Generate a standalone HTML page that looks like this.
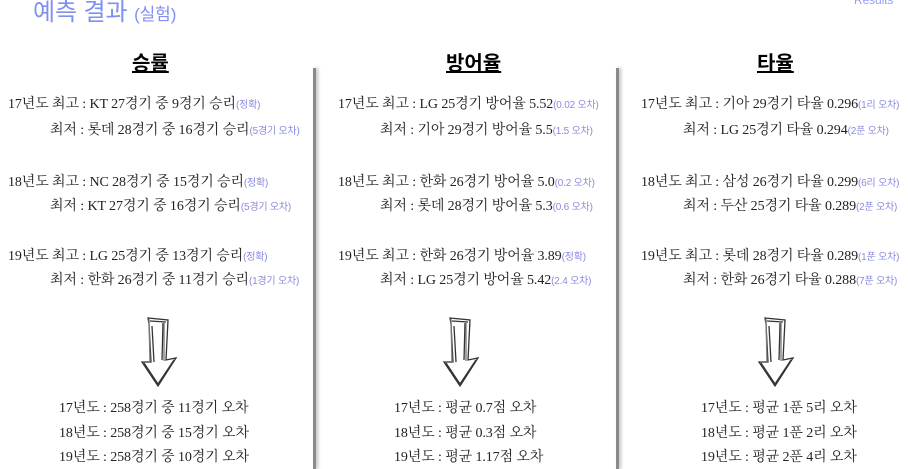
<!DOCTYPE html>
<html><head><meta charset="utf-8"><style>
body{margin:0;width:908px;height:469px;overflow:hidden;background:#fff;position:relative;font-family:"Liberation Serif","Noto Serif CJK KR","Noto Serif CJK SC",serif;font-size:14px;color:#222}
.a{position:absolute;white-space:nowrap;line-height:16px;letter-spacing:-0.1px}
.s{font-size:10px;color:#8a8ae0;font-family:"Liberation Sans","Noto Sans CJK KR",sans-serif;letter-spacing:-0.2px}
.h{position:absolute;font-family:"Liberation Sans","Noto Sans CJK KR",sans-serif;font-weight:bold;font-size:20px;text-decoration:underline;color:#000;line-height:24px}
.d{position:absolute;top:68px;width:3px;height:401px;background:#8a8a8a;box-shadow:2px 0 3px #bbb}
</style></head><body>
<div class="a" style="left:33px;top:0;font-family:'Liberation Sans','Noto Sans CJK KR',sans-serif;font-size:24px;line-height:26px;color:#7f8ff2">예측 결과 <span style="font-size:17px">(실험)</span></div>
<div class="a" style="left:854px;top:-8px;font-family:'Liberation Sans',sans-serif;font-size:12px;color:#8f9ff2">Results</div>
<div class="d" style="left:313px"></div><div class="d" style="left:616px"></div>
<div class="h" style="left:132px;top:52px">승률</div>
<div class="h" style="left:446px;top:52px">방어율</div>
<div class="h" style="left:757px;top:52px">타율</div>

<div class="a" style="left:8px;top:97px">17년도 최고 : KT 27경기 중 9경기 승리<span class="s">(정확)</span></div>
<div class="a" style="left:50px;top:123px">최저 : 롯데 28경기 중 16경기 승리<span class="s">(5경기 오차)</span></div>
<div class="a" style="left:8px;top:175px">18년도 최고 : NC 28경기 중 15경기 승리<span class="s">(정확)</span></div>
<div class="a" style="left:50px;top:199px">최저 : KT 27경기 중 16경기 승리<span class="s">(5경기 오차)</span></div>
<div class="a" style="left:8px;top:249px">19년도 최고 : LG 25경기 중 13경기 승리<span class="s">(정확)</span></div>
<div class="a" style="left:50px;top:273px">최저 : 한화 26경기 중 11경기 승리<span class="s">(1경기 오차)</span></div>

<div class="a" style="left:338px;top:97px">17년도 최고 : LG 25경기 방어율 5.52<span class="s">(0.02 오차)</span></div>
<div class="a" style="left:380px;top:123px">최저 : 기아 29경기 방어율 5.5<span class="s">(1.5 오차)</span></div>
<div class="a" style="left:338px;top:175px">18년도 최고 : 한화 26경기 방어율 5.0<span class="s">(0.2 오차)</span></div>
<div class="a" style="left:380px;top:199px">최저 : 롯데 28경기 방어율 5.3<span class="s">(0.6 오차)</span></div>
<div class="a" style="left:338px;top:249px">19년도 최고 : 한화 26경기 방어율 3.89<span class="s">(정확)</span></div>
<div class="a" style="left:380px;top:273px">최저 : LG 25경기 방어율 5.42<span class="s">(2.4 오차)</span></div>

<div class="a" style="left:641px;top:97px">17년도 최고 : 기아 29경기 타율 0.296<span class="s">(1리 오차)</span></div>
<div class="a" style="left:683px;top:123px">최저 : LG 25경기 타율 0.294<span class="s">(2푼 오차)</span></div>
<div class="a" style="left:641px;top:175px">18년도 최고 : 삼성 26경기 타율 0.299<span class="s">(6리 오차)</span></div>
<div class="a" style="left:683px;top:199px">최저 : 두산 25경기 타율 0.289<span class="s">(2푼 오차)</span></div>
<div class="a" style="left:641px;top:249px">19년도 최고 : 롯데 28경기 타율 0.289<span class="s">(1푼 오차)</span></div>
<div class="a" style="left:683px;top:273px">최저 : 한화 26경기 타율 0.288<span class="s">(7푼 오차)</span></div>

<svg style="position:absolute;left:0;top:0" width="908" height="469">
<defs><g id="ar" fill="none" stroke="#333" stroke-width="1.3"><path d="M10 0 L30 2 L28 42 L38 40 L20 68 L4 44 L13 44 L11 6 Z"/><path d="M12 3 L28 4 M14 8 L16 44 M25 5 L24 42 M6 45 L20 66 L36 42"/><path d="M11 1 L12 44 M26 3 L26 43" stroke="#777"/></g></defs>
<use href="#ar" x="138" y="318"/><use href="#ar" x="440" y="318"/><use href="#ar" x="755" y="318"/>
</svg>

<div class="a" style="left:59px;top:401px">17년도 : 258경기 중 11경기 오차</div>
<div class="a" style="left:59px;top:426px">18년도 : 258경기 중 15경기 오차</div>
<div class="a" style="left:59px;top:450px">19년도 : 258경기 중 10경기 오차</div>
<div class="a" style="left:394px;top:401px">17년도 : 평균 0.7점 오차</div>
<div class="a" style="left:394px;top:426px">18년도 : 평균 0.3점 오차</div>
<div class="a" style="left:394px;top:450px">19년도 : 평균 1.17점 오차</div>
<div class="a" style="left:701px;top:401px">17년도 : 평균 1푼 5리 오차</div>
<div class="a" style="left:701px;top:426px">18년도 : 평균 1푼 2리 오차</div>
<div class="a" style="left:701px;top:450px">19년도 : 평균 2푼 4리 오차</div>
</body></html>
